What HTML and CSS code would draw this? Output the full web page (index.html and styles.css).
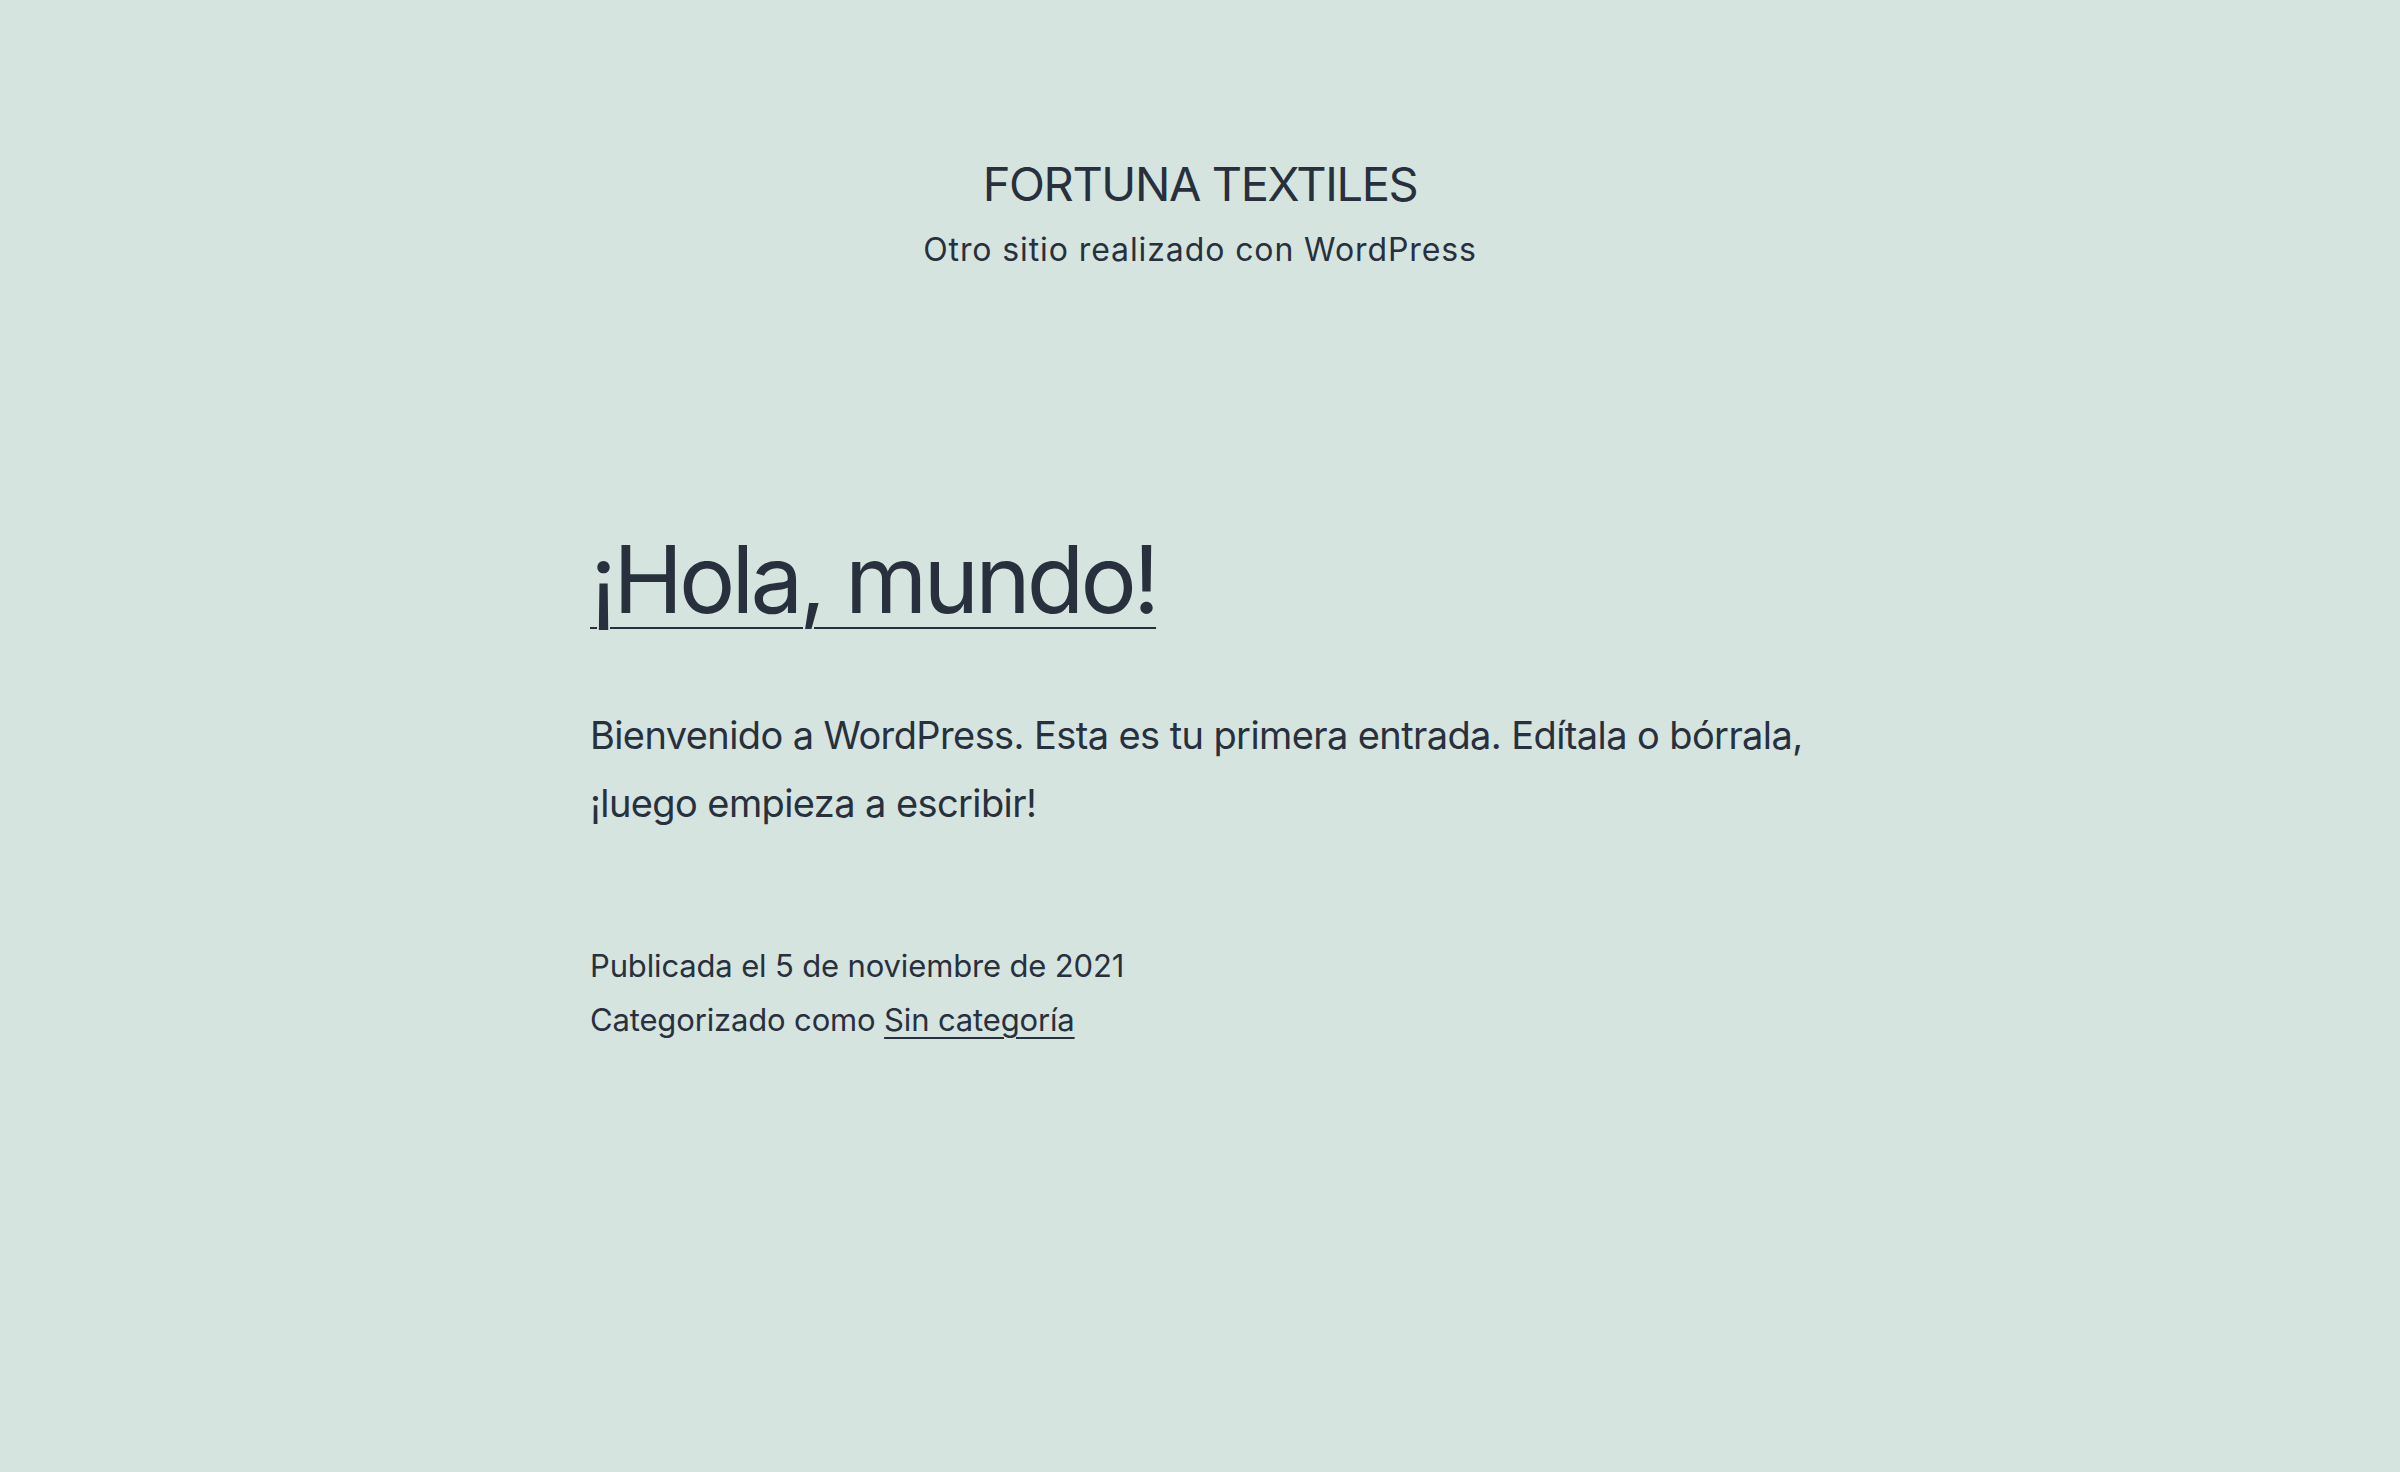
FILE: index.html
```html
<!DOCTYPE html>
<html lang="es">
<head>
<meta charset="utf-8">
<title>FORTUNA TEXTILES</title>
<link rel="stylesheet" href="styles.css">
</head>
<body>
<header class="site-header">
  <p class="site-title">FORTUNA TEXTILES</p>
  <p class="site-description">Otro sitio realizado con WordPress</p>
</header>
<main class="site-main">
  <article class="post">
    <h2 class="entry-title"><a href="#">¡Hola, mundo!</a></h2>
    <div class="entry-content">
      <p>Bienvenido a WordPress. Esta es tu primera entrada. Edítala o bórrala, ¡luego empieza a escribir!</p>
    </div>
    <footer class="entry-footer">
      <span class="posted-on">Publicada el 5 de noviembre de 2021</span>
      <span class="cat-links">Categorizado como <a href="#">Sin categoría</a></span>
    </footer>
  </article>
</main>
</body>
</html>
```
FILE: styles.css
```css
html, body {
  margin: 0;
  padding: 0;
}
body {
  background: #d5e4df;
  color: #28303d;
  font-family: Inter, "Noto Sans", sans-serif;
  min-height: 1472px;
}
a {
  color: #28303d;
}
.site-header {
  display: flex;
  flex-direction: column;
  align-items: center;
  padding-top: 153px;
}
.site-title {
  margin: 0;
  font-size: 47px;
  line-height: 62px;
  font-weight: 400;
  letter-spacing: -1.4px;
}
.site-description {
  margin: 12px 0 0;
  font-size: 32px;
  line-height: 45px;
  letter-spacing: 0.9px;
}
.site-main {
  width: 1220px;
  margin: 0 auto;
  padding-top: 246px;
}
.entry-title {
  margin: 0;
  font-size: 94px;
  line-height: 122px;
  font-weight: 400;
  letter-spacing: -3.9px;
}
.entry-title a {
  text-decoration-thickness: 2px;
  text-underline-offset: 14px;
}
.entry-content p {
  margin: 61px 0 0;
  font-size: 38px;
  line-height: 68px;
  letter-spacing: -0.6px;
}
.entry-footer {
  margin-top: 102px;
  display: flex;
  flex-direction: column;
  font-size: 31px;
  line-height: 54px;
  letter-spacing: -0.15px;
}
.entry-footer a {
  text-decoration-thickness: 2px;
  text-underline-offset: 6px;
}
```
